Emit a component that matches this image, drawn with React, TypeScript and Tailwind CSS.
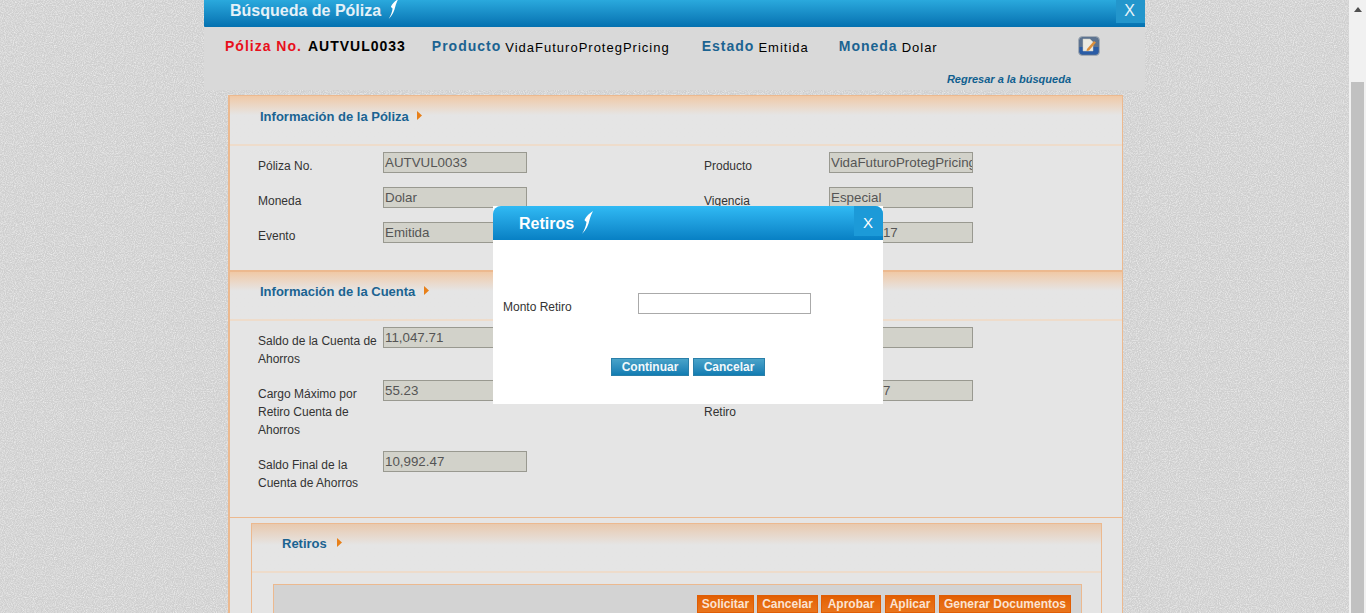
const Swoosh = ({ className }: { className: string }) => (
  <svg viewBox="0 0 11 23" className={className}>
    <path d="M11 0C8 2 4 5 2.5 9C3 10 4 10.5 4.5 11C4 15 2.5 19 0 23C4 19 6.5 14 7.5 9C8.5 5 10 2 11 0Z" fill="#ffffff" />
  </svg>
);

const Arrow = () => (
  <svg viewBox="0 0 5 9" className="w-[5px] h-[9px]">
    <path d="M0 0L5 4.5L0 9Z" fill="#e8801a" />
  </svg>
);

const NoteIcon = () => (
  <svg viewBox="0 0 22 20" className="w-[22px] h-[20px]">
    <rect x="0.5" y="0.5" width="21" height="19" rx="4" fill="#5d7390" stroke="#a3abb5" />
    <path d="M1.5 11H20.5V15.5A3 3 0 0 1 17.5 18.5H4.5A3 3 0 0 1 1.5 15.5Z" fill="#2a5ca6" />
    <path d="M5 3H12L15 6V15H5Z" fill="#ecebe3" stroke="#c9c9c0" strokeWidth="0.5" />
    <path d="M9 13L16 5L18 6.5L11 14.5L8.5 15Z" fill="#dd8f3a" />
  </svg>
);

const Field = ({ value }: { value: string }) => (
  <div className="w-[144px] h-[21px] bg-[#d2d2ca] border border-[#999990] pl-[1px] text-[13.33px] leading-[20px] text-[#555555] overflow-hidden whitespace-nowrap">
    {value}
  </div>
);

const Pair = ({ label, value }: { label: string; value: string }) => (
  <div className="flex items-start">
    <div className="w-[125px] pt-[5px] pr-[2px] text-[12px] leading-[18px] text-[#333333]">{label}</div>
    <Field value={value} />
  </div>
);

const SectionHead = ({ title, gap, height, top }: { title: string; gap: string; height: string; top: string }) => (
  <div className={`${height} ${top} bg-gradient-to-b from-[#f0c9a6] to-[#e5e5e5] to-40% border-b-2 border-[#eedccb] pl-[30px] flex items-start`}>
    <span className="text-[13px] leading-[18px] font-bold text-[#1b6391]">{title}</span>
    <span className={`mt-[3px] ${gap}`}>
      <Arrow />
    </span>
  </div>
);

const OrangeButton = ({ label, width }: { label: string; width: string }) => (
  <button className={`${width} h-[18px] pb-[2px] bg-gradient-to-b from-[#e46103] to-[#e9751c] border border-t-2 border-[#e05e05] text-[12px] leading-[14px] font-bold text-[#fbe3d2]`}>
    {label}
  </button>
);

const BlueButton = ({ label, width }: { label: string; width: string }) => (
  <button className={`${width} h-[18px] bg-gradient-to-b from-[#49a3c9] to-[#0f7cb2] border border-[#2a7fa9] text-[12px] leading-[14px] font-bold text-[#f2f8fb]`}>
    {label}
  </button>
);

const Info = ({ label, value, mr }: { label: string; value: string; mr: string }) => (
  <div className={`flex items-baseline gap-[4px] ${mr}`}>
    <span className="text-[14px] font-bold tracking-[1px] text-[#1b6391]">{label}</span>
    <span className="text-[13px] tracking-[1px] text-black relative top-[1px]">{value}</span>
  </div>
);

export default function App() {
  return (
    <div className="relative h-[613px] w-[1366px] overflow-hidden flex font-['Liberation_Sans',Arial,sans-serif] bg-[#cfcfcf] bg-[url(data:image/svg+xml,%3Csvg%20xmlns=%27http://www.w3.org/2000/svg%27%20width=%27256%27%20height=%27256%27%3E%3Cfilter%20id=%27n%27%3E%3CfeTurbulence%20type=%27fractalNoise%27%20baseFrequency=%27.9%27%20numOctaves=%272%27/%3E%3CfeColorMatrix%20values=%270%200%200%200%201%200%200%200%200%201%200%200%200%200%201%201.2%200%200%200%20-.45%27/%3E%3C/filter%3E%3Crect%20width=%27256%27%20height=%27256%27%20filter=%27url%28%23n%29%27/%3E%3C/svg%3E)]">
      <main className="w-[1349px] pl-[204px]">
        <div className="w-[941px]">
          <div className="h-[27px] bg-gradient-to-b from-[#2aa9dd] to-[#0471b0] flex items-start rounded-bl-[1px]">
            <h1 className="ml-[26px] mt-[1px] text-[16px] leading-[19px] font-bold text-[#e4f1f8]">Búsqueda de Póliza</h1>
            <Swoosh className="ml-[7px] w-[11px] h-[20px] -mt-[1px]" />
            <div className="ml-auto w-[29px] h-[23px] bg-[#2396cc] pr-[2px] text-center text-[16px] leading-[21px] text-[#e8f4fa]">X</div>
          </div>
          <div className="h-[63px] bg-[#d9d9d9] relative">
            <div className="flex items-baseline pl-[21px] pt-[9px]">
              <div className="flex items-baseline gap-[6px] mr-[26px]">
                <span className="text-[14px] font-bold tracking-[1px] text-[#e8101c]">Póliza No.</span>
                <span className="text-[14px] font-bold tracking-[1px] text-black">AUTVUL0033</span>
              </div>
              <Info label="Producto" value="VidaFuturoProtegPricing" mr="mr-[32px]" />
              <Info label="Estado" value="Emitida" mr="mr-[30px]" />
              <Info label="Moneda" value="Dolar" mr="" />
            </div>
            <div className="absolute left-[874px] top-[9px]">
              <NoteIcon />
            </div>
            <a className="absolute right-[74px] top-[45px] text-[11px] leading-[14px] font-bold italic text-[#10608f]">Regresar a la búsqueda</a>
          </div>
        </div>

        <div className="ml-[24px] mt-[5px] w-[895px] border-l-2 border-r border-[#ecb98f] bg-[#e5e5e5] h-[518px]">
          <div className="border-t border-[#ecb98f]">
            <SectionHead title="Información de la Póliza" gap="ml-[8px]" height="h-[50px]" top="pt-[12px]" />
            <div className="h-[124px] pl-[28px] pt-[6px] grid grid-cols-[446px_1fr] auto-rows-[35px]">
              <Pair label="Póliza No." value="AUTVUL0033" />
              <Pair label="Producto" value="VidaFuturoProtegPricing" />
              <Pair label="Moneda" value="Dolar" />
              <Pair label="Vigencia" value="Especial" />
              <Pair label="Evento" value="Emitida" />
              <Pair label="Fecha Emisión" value="01/01/2017" />
            </div>
          </div>
          <div className="border-t-2 border-b border-[#ecb98f]">
            <SectionHead title="Información de la Cuenta" gap="ml-[9px]" height="h-[49px]" top="pt-[11px]" />
            <div className="h-[196px] pl-[28px] pt-[6px] grid grid-cols-[446px_1fr] grid-rows-[53px_71px_auto]">
              <Pair label="Saldo de la Cuenta de Ahorros" value="11,047.71" />
              <Pair label="Monto Retiro" value="" />
              <Pair label="Cargo Máximo por Retiro Cuenta de Ahorros" value="55.23" />
              <Pair label="Monto Máximo de Retiro" value="10,992.47" />
              <Pair label="Saldo Final de la Cuenta de Ahorros" value="10,992.47" />
            </div>
          </div>
          <div className="ml-[21px] mt-[5px] w-[851px] border border-[#ecb98f] h-[200px]">
            <div className="h-[49px] bg-gradient-to-b from-[#e8c9ae] to-[#e5e5e5] to-45% border-b-2 border-[#eedccb] pl-[30px] pt-[11px] flex items-start">
              <span className="text-[13px] leading-[18px] font-bold text-[#1b6391]">Retiros</span>
              <span className="ml-[10px] mt-[3px]">
                <Arrow />
              </span>
            </div>
            <div className="ml-[21px] mt-[11px] w-[809px] h-[120px] border border-[#ecb98f] bg-[#d3d3d3] pt-[10px] pr-[10px] flex justify-end gap-[3px]">
              <OrangeButton label="Solicitar" width="w-[57px]" />
              <OrangeButton label="Cancelar" width="w-[61px]" />
              <OrangeButton label="Aprobar" width="w-[60px]" />
              <OrangeButton label="Aplicar" width="w-[50px] ml-[1px]" />
              <OrangeButton label="Generar Documentos" width="w-[132px] ml-[1px]" />
            </div>
          </div>
        </div>
      </main>

      <aside className="w-[17px] h-full bg-[#f1f1f1] flex flex-col items-center">
        <svg viewBox="0 0 8 5" className="w-[8px] h-[5px] mt-[7px]">
          <path d="M4 0L8 5H0Z" fill="#505050" />
        </svg>
        <div className="w-[13px] mt-[70px] flex-1 bg-[#c1c1c1]" />
      </aside>

      <div className="absolute left-[493px] top-[206px] w-[390px] h-[198px] bg-white">
        <div className="h-[34px] rounded-t-[8px] bg-gradient-to-b from-[#30baf4] to-[#0780c4] flex items-start">
          <h2 className="ml-[26px] mt-[8px] text-[16px] leading-[19px] font-bold text-white">Retiros</h2>
          <Swoosh className="ml-[8px] mt-[5px] w-[11px] h-[23px]" />
          <div className="ml-auto w-[29px] h-[30px] rounded-tr-[8px] bg-[#1c9ad8] pr-[1px] text-center text-[15px] leading-[34px] text-white">X</div>
        </div>
        <div className="flex items-start pl-[10px] pt-[53px]">
          <label className="w-[135px] pt-[5px] text-[12px] leading-[18px] text-[#333333]">Monto Retiro</label>
          <input className="w-[173px] h-[21px] bg-white border border-[#aaaaaa]" />
        </div>
        <div className="flex justify-center gap-[4px] pt-[42px]">
          <BlueButton label="Continuar" width="w-[78px]" />
          <BlueButton label="Cancelar" width="w-[72px]" />
        </div>
      </div>
    </div>
  );
}
